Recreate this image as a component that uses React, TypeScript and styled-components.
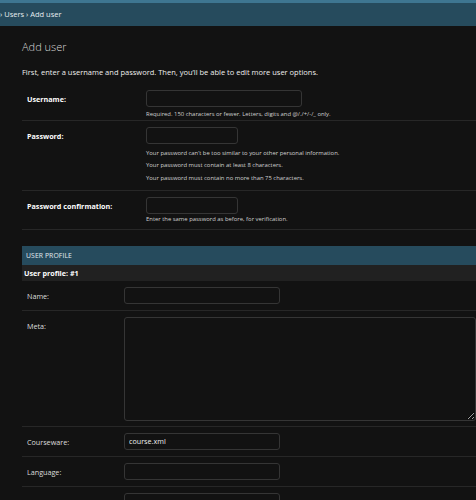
import styled, { createGlobalStyle } from "styled-components";

const GlobalStyle = createGlobalStyle`
  html, body {
    margin: 0;
    padding: 0;
    background: #121212;
  }
  body {
    font-family: "Open Sans", "Noto Sans", "Liberation Sans", sans-serif;
    color: #eeeeee;
    overflow: hidden;
  }
`;

const Page = styled.div`
  width: 476px;
  height: 500px;
  overflow: hidden;
  background: #121212;
`;

const Breadcrumbs = styled.div`
  border-top: 3px solid #3e7691;
  background: #264b5d;
  height: 23px;
  line-height: 23px;
  font-size: 7.5px;
  color: #e6edf0;
  white-space: nowrap;
`;

const Content = styled.div`
  padding-left: 22px;
`;

const Title = styled.h1`
  margin: 0;
  padding-top: 10px;
  height: 22px;
  line-height: 22px;
  font-size: 11px;
  font-weight: 300;
  color: #d6d6d6;
`;

const Intro = styled.p`
  margin: 0;
  padding-top: 9px;
  line-height: 10px;
  font-size: 7.5px;
  color: #eeeeee;
`;

const Fieldset = styled.div`
  margin-top: 7px;
`;

const Row = styled.div<{ $bottom: number }>`
  display: flex;
  padding: 6px 0 ${(p) => p.$bottom}px;
  border-bottom: 1px solid #272727;
`;

const Label = styled.label<{ $width: number; $bold?: boolean; $top?: boolean }>`
  flex: none;
  width: ${(p) => p.$width}px;
  padding-left: 5px;
  box-sizing: border-box;
  font-size: 7.2px;
  line-height: ${(p) => (p.$top ? "19px" : "18px")};
  font-weight: ${(p) => (p.$bold ? 700 : 400)};
  color: ${(p) => (p.$bold ? "#ffffff" : "#dddddd")};
  white-space: nowrap;
`;

const Field = styled.div`
  display: flex;
  flex-direction: column;
  align-items: flex-start;
`;

const Input = styled.input<{ $width: number }>`
  box-sizing: border-box;
  width: ${(p) => p.$width}px;
  height: 17px;
  margin: 0;
  padding: 0 4px;
  background: #121212;
  border: 1px solid #353535;
  border-radius: 3px;
  color: #eeeeee;
  font-family: inherit;
  font-size: 7.2px;
  outline: none;
`;

const TextArea = styled.textarea`
  box-sizing: border-box;
  width: 354px;
  height: 104px;
  margin: 0;
  padding: 4px;
  background: #121212;
  border: 1px solid #353535;
  border-radius: 3px;
  color: #eeeeee;
  font-family: inherit;
  font-size: 7.2px;
  outline: none;
  resize: vertical;
  display: block;
`;

const Help = styled.div<{ $gap: number }>`
  margin-top: ${(p) => p.$gap}px;
  line-height: 9px;
  font-size: 5.9px;
  color: #d0d0d0;
  white-space: nowrap;
`;

const HelpList = styled.ul`
  list-style: none;
  margin: 1px 0 3px;
  padding: 0;

  & li {
    margin-top: 3.5px;
    line-height: 9px;
    font-size: 5.9px;
    color: #d0d0d0;
    white-space: nowrap;
  }
`;

const Module = styled.div`
  margin-top: 16px;
`;

const Caption = styled.h2`
  margin: 0;
  height: 19px;
  line-height: 19px;
  padding-left: 4px;
  background: #264b5d;
  font-size: 6.8px;
  font-weight: 400;
  color: #e4ecef;
  letter-spacing: 0.1px;
`;

const InlineHeader = styled.h3`
  margin: 0;
  height: 16px;
  line-height: 16px;
  padding-left: 2px;
  background: #212121;
  font-size: 7.2px;
  font-weight: 700;
  color: #ffffff;
`;

const InlineRow = styled.div`
  display: flex;
  padding: 6px 0 5px;
  border-bottom: 1px solid #272727;
`;

export default function App() {
  return (
    <Page>
      <GlobalStyle />
      <Breadcrumbs>› Users › Add user</Breadcrumbs>
      <Content>
        <Title>Add user</Title>
        <Intro>
          First, enter a username and password. Then, you’ll be able to edit
          more user options.
        </Intro>
        <Fieldset>
          <Row $bottom={1}>
            <Label $width={124} $bold>
              Username:
            </Label>
            <Field>
              <Input $width={156} type="text" />
              <Help $gap={3}>
                Required. 150 characters or fewer. Letters, digits and @/./+/-/_
                only.
              </Help>
            </Field>
          </Row>
          <Row $bottom={4}>
            <Label $width={124} $bold>
              Password:
            </Label>
            <Field>
              <Input $width={92} type="password" />
              <HelpList>
                <li>
                  Your password can’t be too similar to your other personal
                  information.
                </li>
                <li>Your password must contain at least 8 characters.</li>
                <li>Your password must contain no more than 75 characters.</li>
              </HelpList>
            </Field>
          </Row>
          <Row $bottom={5}>
            <Label $width={124} $bold>
              Password confirmation:
            </Label>
            <Field>
              <Input $width={92} type="password" />
              <Help $gap={1}>
                Enter the same password as before, for verification.
              </Help>
            </Field>
          </Row>
        </Fieldset>
        <Module>
          <Caption>USER PROFILE</Caption>
          <InlineHeader>User profile: #1</InlineHeader>
          <InlineRow>
            <Label $width={102}>Name:</Label>
            <Input $width={156} type="text" />
          </InlineRow>
          <InlineRow>
            <Label $width={102} $top>
              Meta:
            </Label>
            <TextArea />
          </InlineRow>
          <InlineRow>
            <Label $width={102}>Courseware:</Label>
            <Input $width={156} type="text" defaultValue="course.xml" />
          </InlineRow>
          <InlineRow>
            <Label $width={102}>Language:</Label>
            <Input $width={156} type="text" />
          </InlineRow>
          <InlineRow>
            <Label $width={102}>Location:</Label>
            <Input $width={156} type="text" />
          </InlineRow>
        </Module>
      </Content>
    </Page>
  );
}
